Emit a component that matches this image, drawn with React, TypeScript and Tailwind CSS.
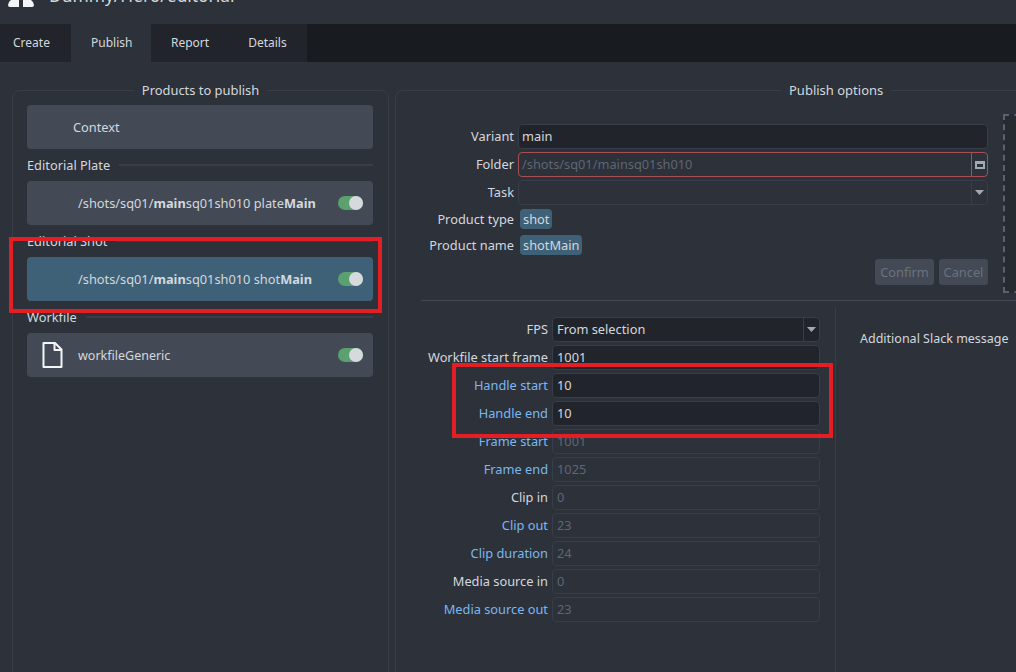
const font = { fontFamily: '"Noto Sans", sans-serif' };

const publishRows = [
  { label: "FPS", value: "From selection", kind: "select", labelCls: "text-[#d3d8de]" },
  { label: "Workfile start frame", value: "1001", kind: "input", labelCls: "text-[#d3d8de]" },
  { label: "Handle start", value: "10", kind: "input", labelCls: "text-[#79b8f0]" },
  { label: "Handle end", value: "10", kind: "input", labelCls: "text-[#79b8f0]" },
  { label: "Frame start", value: "1001", kind: "off", labelCls: "text-[#79b8f0]" },
  { label: "Frame end", value: "1025", kind: "off", labelCls: "text-[#79b8f0]" },
  { label: "Clip in", value: "0", kind: "off", labelCls: "text-[#d3d8de]" },
  { label: "Clip out", value: "23", kind: "off", labelCls: "text-[#79b8f0]" },
  { label: "Clip duration", value: "24", kind: "off", labelCls: "text-[#79b8f0]" },
  { label: "Media source in", value: "0", kind: "off", labelCls: "text-[#d3d8de]" },
  { label: "Media source out", value: "23", kind: "off", labelCls: "text-[#79b8f0]" },
];

function Toggle() {
  return (
    <div className="w-[25px] h-[14px] rounded-full bg-[#5aa16f] flex justify-end items-center">
      <div className="w-[14px] h-[14px] rounded-full bg-[#d6d9de]" />
    </div>
  );
}

function Caret() {
  return (
    <svg width="9" height="5" viewBox="0 0 9 5">
      <path d="M0 0H9L4.5 5Z" fill="#a3a9b2" />
    </svg>
  );
}

function ProductCard({ children, active, icon, noToggle }: { children: React.ReactNode; active?: boolean; icon?: boolean; noToggle?: boolean }) {
  return (
    <div className={`h-[44px] rounded flex items-center pr-[10px] ${active ? "bg-[#3f6178]" : "bg-[#434a56]"}`}>
      <div className="w-[51px] flex justify-center">
        {icon && (
          <svg width="21" height="26" viewBox="0 0 21 26" fill="none" stroke="#f4f5f6" strokeWidth="2">
            <path d="M1.5 1H13L19.5 7.5V25H1.5Z" strokeLinejoin="round" />
            <path d="M12.5 1V8H19.5" strokeLinejoin="round" />
          </svg>
        )}
      </div>
      <div className="flex-1 text-[#d3d8de]">{children}</div>
      {!noToggle && <Toggle />}
    </div>
  );
}

function GroupTitle({ title }: { title: string }) {
  return (
    <div className="h-[32px] flex items-center gap-[9px] text-[#d3d8de]">
      <span>{title}</span>
      <div className="flex-1 h-[2px] bg-[#373e49]" />
    </div>
  );
}

function Path({ name }: { name: string }) {
  return (
    <span>
      /shots/sq01/<b>main</b>sq01sh010 {name}
      <b>Main</b>
    </span>
  );
}

function Field({ children, error, filled }: { children: React.ReactNode; error?: boolean; filled?: boolean }) {
  return (
    <div className={`h-[25px] flex-1 rounded-[4px] border flex items-center ${error ? "border-[#a84f54]" : "border-[#373e49]"} ${filled ? "bg-[#21252b]" : ""}`}>
      {children}
    </div>
  );
}

function TopRow({ label, children }: { label: string; children: React.ReactNode }) {
  return (
    <div className="flex items-center">
      <div className="w-[111px] text-right pr-[4px] pb-[2px] text-[#d3d8de]">{label}</div>
      {children}
    </div>
  );
}

function BadgeRow({ label, text }: { label: string; text: string }) {
  return (
    <div className="flex items-center h-[20px]">
      <div className="w-[111px] text-right pr-[4px] text-[#d3d8de] whitespace-nowrap">{label}</div>
      <span className="ml-[2px] h-[20px] px-[3px] rounded bg-[#3f6178] text-[#d3d8de] flex items-center">{text}</span>
    </div>
  );
}

export default function App() {
  return (
    <div className="relative w-[1016px] h-[672px] overflow-hidden bg-[#2c313a] text-[12.8px] leading-[18px]" style={font}>
      {/* window title, cut off by the top edge */}
      <div className="h-[24px] overflow-hidden flex gap-[15px] pl-[8px]">
        <svg width="26" height="8" viewBox="0 0 26 8" className="shrink-0">
          <path d="M3 0H11V7H2Q0 7 0 5Q0 2 3 0ZM15 0H23Q26 2 26 5Q26 7 24 7H15Z" fill="#f4f5f6" />
        </svg>
        <div className="-mt-[17px] text-[17.4px] leading-[24px] text-[#d3d8de] whitespace-nowrap">Dummy/Hero/editorial</div>
      </div>

      <div className="h-[38px] bg-[#181b20] flex text-[12px] text-[#d3d8de]">
        <div className="w-[71px] bg-[#21252b] flex items-center pl-[13px] pb-[1px]">Create</div>
        <div className="w-[80px] bg-[#2c313a] flex items-center pl-[20px] pb-[1px]">Publish</div>
        <div className="w-[156px] bg-[#21252b] flex items-center pl-[20px] gap-[39px] pb-[1px]">
          <span>Report</span>
          <span>Details</span>
        </div>
      </div>

      <div className="flex gap-[7px] pl-[12px] pt-[28px]">
        {/* products */}
        <div className="w-[377px] shrink-0">
          <div className="relative h-[600px] border border-[#373e49] rounded-[8px] pl-[14px] pr-[15px] pt-[14px]">
            <div className="absolute -top-[10px] left-0 right-0 flex justify-center">
              <span className="bg-[#2c313a] px-[8px] text-[12.9px] text-[#d3d8de]">Products to publish</span>
            </div>
            <ProductCard noToggle>
              <span className="-ml-[5px]">Context</span>
            </ProductCard>
            <GroupTitle title="Editorial Plate" />
            <ProductCard>
              <Path name="plate" />
            </ProductCard>
            <GroupTitle title="Editorial Shot" />
            <ProductCard active>
              <Path name="shot" />
            </ProductCard>
            <GroupTitle title="Workfile" />
            <ProductCard icon>
              <span className="text-[12.5px]">workfileGeneric</span>
            </ProductCard>
          </div>
        </div>

        {/* options */}
        <div className="flex-1 -ml-px relative h-[600px] border border-[#373e49] rounded-tl-[8px] border-r-0 pt-[33px]">
          <div className="absolute -top-[10px] left-[385px] bg-[#2c313a] px-[8px] text-[13px] text-[#d3d8de]">Publish options</div>

          <div className="flex items-start h-[161px]">
            <div className="w-[592px] pl-[11px]">
              <div className="flex flex-col gap-[3px]">
                <TopRow label="Variant">
                  <Field filled>
                    <div className="px-[3px] pb-[2px] text-[#d3d8de]">main</div>
                  </Field>
                </TopRow>
                <TopRow label="Folder">
                  <Field error>
                    <div className="flex-1 px-[3px] pb-[2px] text-[#5f6672]">/shots/sq01/mainsq01sh010</div>
                    <div className="w-[16px] h-full border-l border-[#a84f54] flex items-center justify-center">
                      <div className="w-[10px] h-[8px] border-2 border-t-[3px] border-[#a3a9b2]" />
                    </div>
                  </Field>
                </TopRow>
                <TopRow label="Task">
                  <Field>
                    <div className="flex-1" />
                    <div className="w-[16px] h-full border-l border-[#373e49] flex items-center justify-center">
                      <Caret />
                    </div>
                  </Field>
                </TopRow>
              </div>
              <div className="flex flex-col gap-[6px] mt-[4px]">
                <BadgeRow label="Product type" text="shot" />
                <BadgeRow label="Product name" text="shotMain" />
              </div>
              <div className="flex justify-end gap-[5px] mt-[4px]">
                <div className="h-[26px] w-[59px] rounded-[3px] bg-[#434a56] text-[#6b727e] flex items-center justify-center">Confirm</div>
                <div className="h-[26px] w-[49px] rounded-[3px] bg-[#434a56] text-[#6b727e] flex items-center justify-center">Cancel</div>
              </div>
            </div>
            <div className="ml-[15px] -mt-[10px] w-[40px] h-[179px] shrink-0 bg-[#262a31] border-2 border-dashed border-r-0 border-[#5c626d]" />
          </div>

          <div className="ml-[25px] h-px bg-[#434a56] mt-[15px]" />

          <div className="flex mt-[6px]">
            <div className="w-[440px] shrink-0 pl-[1px] pr-[15px] border-r border-[#373e49] pt-[10px] h-[400px] flex flex-col gap-[3px]">
              {publishRows.map((row) => (
                <div key={row.label} className="h-[25px] flex items-center">
                  <div className={`w-[155px] text-right pr-[4px] pb-[2px] shrink-0 whitespace-nowrap ${row.labelCls}`}>{row.label}</div>
                  <div className={`flex-1 h-[25px] rounded-[4px] border border-[#373e49] flex items-center pl-[4px] ${row.kind === "off" ? "text-[#5f6672]" : "bg-[#21252b] text-[#d3d8de]"}`}>
                    <span className="flex-1 pb-[2px]">{row.value}</span>
                    {row.kind === "select" && (
                      <div className="w-[16px] h-full border-l border-[#373e49] flex items-center justify-center">
                        <Caret />
                      </div>
                    )}
                  </div>
                </div>
              ))}
            </div>
            <div className="pl-[24px] pt-[23px] text-[12.5px] text-[#d3d8de] whitespace-nowrap">Additional Slack message</div>
          </div>
        </div>
      </div>

      {/* annotations drawn over the screenshot */}
      <div className="absolute left-[9px] top-[237px] w-[373px] h-[76px] border-[4px] border-[#e31e24]" />
      <div className="absolute left-[452px] top-[363px] w-[381px] h-[75px] border-[4px] border-[#e31e24]" />
    </div>
  );
}
